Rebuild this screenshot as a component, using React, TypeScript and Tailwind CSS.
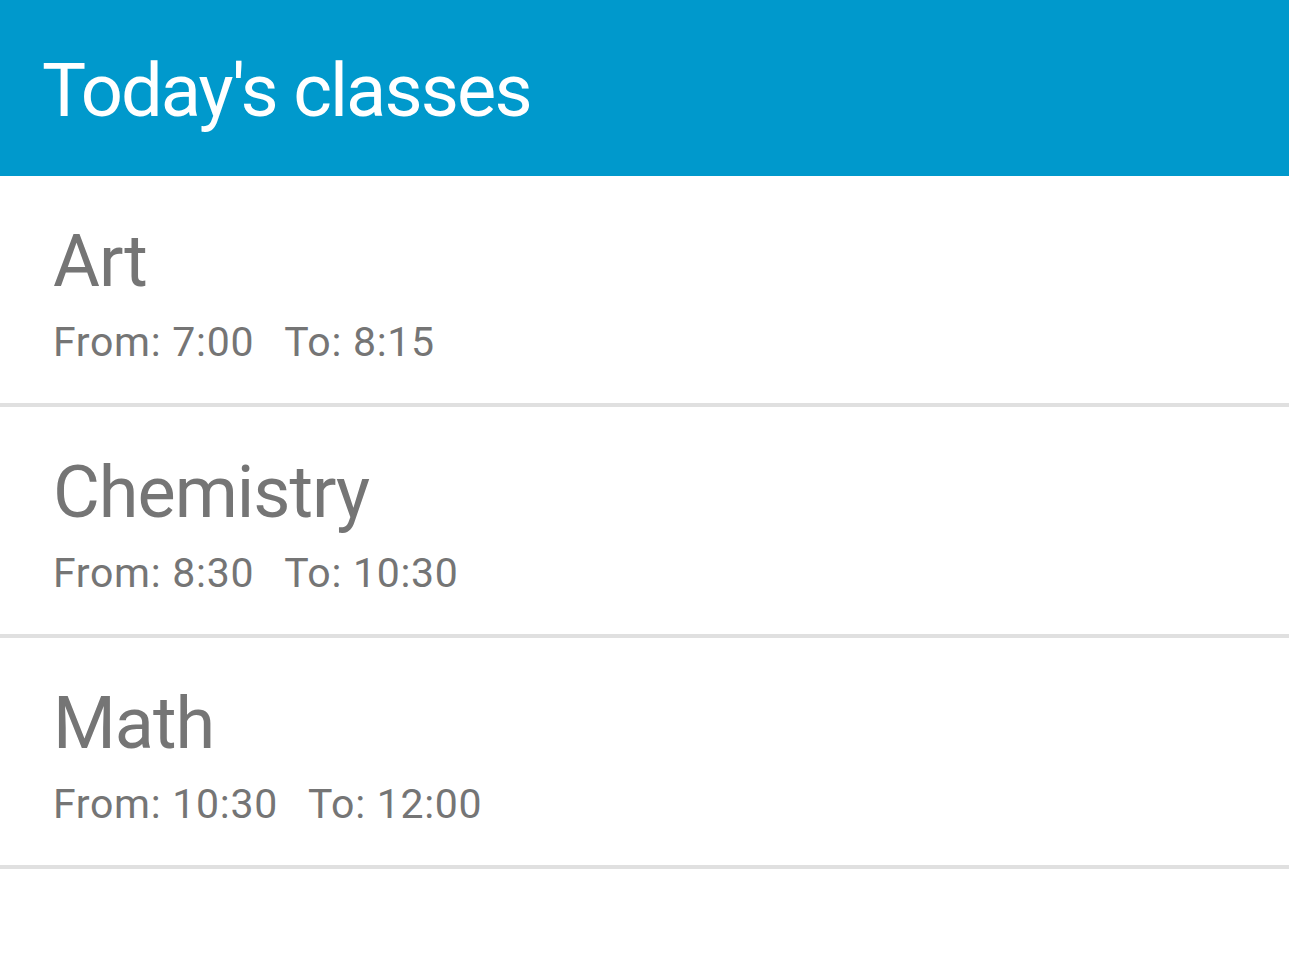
import React from 'react';

interface ClassItem {
  name: string;
  from: string;
  to: string;
}

const classes: ClassItem[] = [
  { name: 'Art', from: '7:00', to: '8:15' },
  { name: 'Chemistry', from: '8:30', to: '10:30' },
  { name: 'Math', from: '10:30', to: '12:00' },
];

const ClassRow: React.FC<{ item: ClassItem }> = ({ item }) => (
  <div className="border-b-4 border-[#e0e0e0] h-[231px] pt-[50px] pl-[53px] text-[#757575]">
    <div className="text-[72px] leading-none tracking-[-1px]">{item.name}</div>
    <div className="mt-[24px] text-[41px] leading-none tracking-[0.7px] flex">
      <span>From: {item.from}</span>
      <span className="ml-[30px]">To: {item.to}</span>
    </div>
  </div>
);

export default function App() {
  return (
    <div className="w-[1289px] h-[960px] bg-white" style={{ fontFamily: 'Roboto, "Noto Sans", sans-serif' }}>
      <div className="h-[176px] bg-[#0099cc] pt-[54px] pl-[42px]">
        <h1 className="text-white text-[74px] leading-none tracking-[-1.9px]">Today's classes</h1>
      </div>
      <div className="flex flex-col">
        {classes.map((c) => (
          <ClassRow key={c.name} item={c} />
        ))}
      </div>
    </div>
  );
}
